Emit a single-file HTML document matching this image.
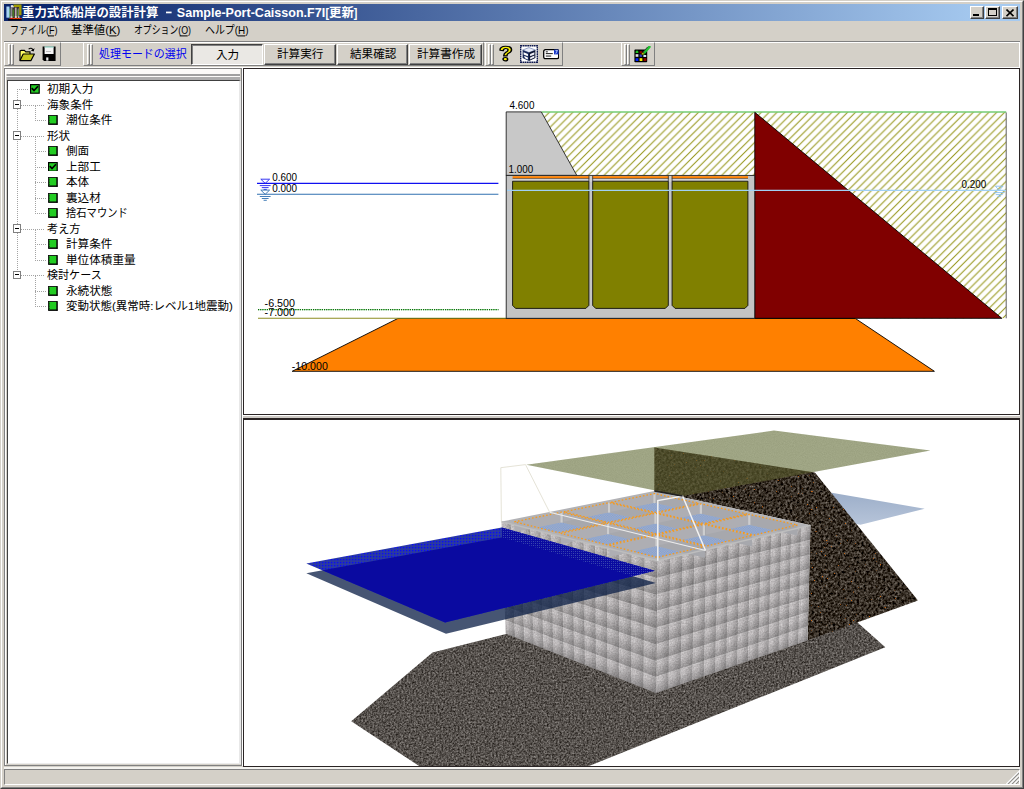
<!DOCTYPE html><html lang="ja"><head><meta charset="utf-8"><title>重力式係船岸の設計計算 - Sample-Port-Caisson.F7I[更新]</title><style>
html,body{margin:0;padding:0;}
body{width:1024px;height:789px;overflow:hidden;background:#d4d0c8;font-family:"Liberation Sans","Noto Sans CJK JP",sans-serif;font-size:12px;position:relative;}
.a{position:absolute;box-sizing:border-box;}
svg.t{position:absolute;overflow:visible;}
svg.t text{font-family:"Liberation Sans","Noto Sans CJK JP",sans-serif;}
.raised{border:1px solid;border-color:#fff #808080 #808080 #fff;}
.sunk{border:1px solid;border-color:#808080 #fff #fff #808080;}
.btn{background:#d4d0c8;border:1px solid;border-color:#fff #404040 #404040 #fff;box-shadow:inset -1px -1px 0 #808080;}
.grip{width:3px;border:1px solid;border-color:#fff #808080 #808080 #fff;}
</style></head><body><div class="a" style="left:0;top:0;width:1024px;height:789px;border:1px solid;border-color:#d4d0c8 #404040 #404040 #d4d0c8;"></div><div class="a" style="left:1px;top:1px;width:1022px;height:787px;border:1px solid;border-color:#fff #808080 #808080 #fff;"></div><div class="a" style="left:4px;top:4px;width:1016px;height:17.1px;background:linear-gradient(90deg,#0a246a 0%,#0a246a 3%,#a6caf0 97%,#a6caf0 100%);"></div><svg class="a" style="left:5.5px;top:4.4px" width="16" height="16.6" viewBox="0 0 16 16.6"><rect x="0.4" y="2.5" width="3.1" height="11.2" fill="#a8d4f4"/><rect x="3.5" y="4.6" width="0.9" height="9" fill="#80d870"/><rect x="7.4" y="0.5" width="8.1" height="3.6" fill="#a09a00"/><rect x="12.8" y="4" width="2.7" height="7.2" fill="#a09a00"/><rect x="4.5" y="3" width="8.6" height="11" fill="#3a3030"/><path d="M4.8 1.2L6.6 0.9L8.2 3.2L4.8 3.6Z" fill="#e8e6e6"/><rect x="4.6" y="3.6" width="1.8" height="10.4" fill="#8c8a92"/><rect x="6.6" y="5.4" width="1.2" height="7.6" fill="#4a8a20"/><rect x="8.9" y="3.6" width="1.7" height="10.4" fill="#b4acac"/><rect x="11.2" y="5.4" width="1.1" height="7.6" fill="#4a8a20"/><rect x="12.3" y="4.4" width="0.9" height="9.6" fill="#8c8a92"/><rect x="4.6" y="12.4" width="1.8" height="1.6" fill="#d8d8d8"/><rect x="8.9" y="12.2" width="1.7" height="1.8" fill="#e0e0e0"/><rect x="12.0" y="12.4" width="1.4" height="1.6" fill="#d0d0d0"/><rect x="3.6" y="13.9" width="11.9" height="1.2" fill="#e05000"/><path d="M4 14.5h1.6M6.2 14.5h1M9.4 14.5h1M12.2 14.5h0.9M14 14.5h1" stroke="#d00818" stroke-width="1.2"/><rect x="2" y="15" width="13.8" height="1.4" fill="#100808"/></svg><svg class="t" style="left:22.4px;top:6.0px;" width="138.4" height="15.5" viewBox="0 0 138.4 15.5"><title>重力式係船岸の設計計算</title><text x="0" y="10.91" font-size="12.4" font-weight="bold" fill="#fff" textLength="136.4" lengthAdjust="spacingAndGlyphs">重力式係船岸の設計計算</text></svg><svg class="a" style="left:160px;top:4px;font-family:'Liberation Sans',sans-serif;font-weight:bold" width="210" height="18" viewBox="160 4 210 18" fill="#fff" font-size="12.6"><rect x="166" y="11.6" width="5.6" height="1.7"/><text x="176.8" y="17" textLength="148.4" lengthAdjust="spacingAndGlyphs">Sample-Port-Caisson.F7I</text><text x="325.4" y="17" textLength="3.6" lengthAdjust="spacingAndGlyphs">[</text><text x="353.8" y="17" textLength="3.6" lengthAdjust="spacingAndGlyphs">]</text></svg><svg class="t" style="left:328.6px;top:6.0px;" width="26.8" height="15.5" viewBox="0 0 26.8 15.5"><title>更新</title><text x="0" y="10.91" font-size="12.4" font-weight="bold" fill="#fff" textLength="24.8" lengthAdjust="spacingAndGlyphs">更新</text></svg><div class="a btn" style="left:969.6px;top:5.8px;width:14.6px;height:13.2px;"></div><div class="a" style="left:973.4px;top:14.2px;width:6px;height:1.9px;background:#000"></div><div class="a btn" style="left:984.6px;top:5.8px;width:15.8px;height:13.2px;"></div><div class="a" style="left:988px;top:8px;width:9px;height:8.2px;border:1px solid #000;border-top-width:2px"></div><div class="a btn" style="left:1002.4px;top:5.8px;width:15.4px;height:13.2px;"></div><svg class="a" style="left:1006.2px;top:8.6px" width="8" height="8" viewBox="0 0 8 8"><path d="M0.5 0.5L7.5 7.2M7.5 0.5L0.5 7.2" stroke="#000" stroke-width="1.6" fill="none"/></svg><svg class="t" style="left:10.2px;top:23.6px;" width="49.6" height="14.5" viewBox="0 0 49.6 14.5"><title>ファイル(F)</title><text x="0" y="10.21" font-size="11.6" fill="#000" textLength="47.6" lengthAdjust="spacingAndGlyphs">ファイル(F)</text><rect x="38.0" y="11.4" width="6.0" height="1" fill="#000"/></svg><svg class="t" style="left:71px;top:23.6px;" width="51.4" height="14.5" viewBox="0 0 51.4 14.5"><title>基準値(K)</title><text x="0" y="10.21" font-size="11.6" fill="#000" textLength="49.4" lengthAdjust="spacingAndGlyphs">基準値(K)</text><rect x="38.2" y="11.4" width="7.4" height="1" fill="#000"/></svg><svg class="t" style="left:134.2px;top:23.6px;" width="59.0" height="14.5" viewBox="0 0 59.0 14.5"><title>オプション(O)</title><text x="0" y="10.21" font-size="11.6" fill="#000" textLength="57" lengthAdjust="spacingAndGlyphs">オプション(O)</text><rect x="45.7" y="11.4" width="8.0" height="1" fill="#000"/></svg><svg class="t" style="left:205px;top:23.6px;" width="45.6" height="14.5" viewBox="0 0 45.6 14.5"><title>ヘルプ(H)</title><text x="0" y="10.21" font-size="11.6" fill="#000" textLength="43.6" lengthAdjust="spacingAndGlyphs">ヘルプ(H)</text><rect x="32.6" y="11.4" width="7.6" height="1" fill="#000"/></svg><div class="a" style="left:4px;top:40.6px;width:1016px;height:1px;background:#808080"></div><div class="a" style="left:4px;top:41.6px;width:1016px;height:1px;background:#fff"></div><div class="a raised" style="left:4.4px;top:42.4px;width:57px;height:24px;"></div><div class="a grip" style="left:7.6000000000000005px;top:44.4px;height:20.4px;"></div><div class="a grip" style="left:10.8px;top:44.4px;height:20.4px;"></div><div class="a raised" style="left:83.4px;top:42.4px;width:400.4px;height:24px;"></div><div class="a grip" style="left:86.60000000000001px;top:44.4px;height:20.4px;"></div><div class="a grip" style="left:89.80000000000001px;top:44.4px;height:20.4px;"></div><div class="a raised" style="left:484.6px;top:42.4px;width:78px;height:24px;"></div><div class="a grip" style="left:487.8px;top:44.4px;height:20.4px;"></div><div class="a grip" style="left:491.0px;top:44.4px;height:20.4px;"></div><div class="a raised" style="left:620.6px;top:42.4px;width:34.8px;height:24px;"></div><div class="a grip" style="left:623.8000000000001px;top:44.4px;height:20.4px;"></div><div class="a grip" style="left:627.0px;top:44.4px;height:20.4px;"></div><div class="a" style="left:4px;top:66.6px;width:1016px;height:1px;background:#808080"></div><div class="a" style="left:4px;top:67.4px;width:1016px;height:1px;background:#fff"></div><svg class="a" style="left:19px;top:46px" width="16.5" height="16" viewBox="0 0 16.5 16"><path d="M1 14.6V5.6Q1 4.4 2.2 4.4H5.4L6.8 5.8H11V8" fill="#ffff66" stroke="#000" stroke-width="1.2"/><path d="M1 14.6L4.2 8H15.4L12 14.6Z" fill="#c8c820" stroke="#000" stroke-width="1.2" stroke-linejoin="round"/><path d="M9.6 3.2Q12.4 0.8 14.4 4.2" fill="none" stroke="#000" stroke-width="1.1"/><path d="M15.6 2.2L14.6 5.6L11.8 4.6Z" fill="#000"/></svg><svg class="a" style="left:42px;top:46.4px" width="14.4" height="15.6" viewBox="0 0 14.4 15.6"><path d="M0.6 0.6H13.6V15H2L0.6 13.6Z" fill="#000"/><rect x="2.6" y="0.6" width="9" height="7.4" fill="#f4f4f4"/><rect x="2.6" y="0.4" width="9" height="1.2" fill="#8fd0c0"/><rect x="4" y="5.2" width="5" height="0.8" fill="#b0b0b0"/><rect x="3.6" y="10.6" width="7" height="4.4" fill="#000"/><rect x="4.2" y="11.4" width="2.2" height="3.2" fill="#e8e8e8"/></svg><svg class="t" style="left:98.6px;top:48.2px;" width="89.7" height="14.5" viewBox="0 0 89.7 14.5"><title>処理モードの選択</title><text x="0" y="10.21" font-size="11.6" fill="#0000f0" textLength="87.7" lengthAdjust="spacingAndGlyphs">処理モードの選択</text></svg><div class="a" style="left:191.4px;top:44px;width:71.2px;height:20.8px;border:1px solid;border-color:#404040 #fff #fff #404040;box-shadow:inset 1px 1px 0 #808080;background:#eae8e4"></div><svg class="t" style="left:216.4px;top:49.2px;" width="25.2" height="14.5" viewBox="0 0 25.2 14.5"><title>入力</title><text x="0" y="10.21" font-size="11.6" fill="#000" textLength="23.2" lengthAdjust="spacingAndGlyphs">入力</text></svg><div class="a btn" style="left:264px;top:44px;width:71.6px;height:20.8px;"></div><svg class="t" style="left:277px;top:48.3px;" width="48.4" height="14.5" viewBox="0 0 48.4 14.5"><title>計算実行</title><text x="0" y="10.21" font-size="11.6" fill="#000" textLength="46.4" lengthAdjust="spacingAndGlyphs">計算実行</text></svg><div class="a btn" style="left:336.8px;top:44px;width:71px;height:20.8px;"></div><svg class="t" style="left:350px;top:48.3px;" width="48.4" height="14.5" viewBox="0 0 48.4 14.5"><title>結果確認</title><text x="0" y="10.21" font-size="11.6" fill="#000" textLength="46.4" lengthAdjust="spacingAndGlyphs">結果確認</text></svg><div class="a btn" style="left:409px;top:44px;width:73px;height:20.8px;"></div><svg class="t" style="left:416.6px;top:48.3px;" width="60.0" height="14.5" viewBox="0 0 60.0 14.5"><title>計算書作成</title><text x="0" y="10.21" font-size="11.6" fill="#000" textLength="58" lengthAdjust="spacingAndGlyphs">計算書作成</text></svg><svg class="a" style="left:497.3px;top:44.8px" width="17.5" height="17.2" viewBox="0 0 13 17" preserveAspectRatio="none"><path d="M2.2 5.2Q2.2 1.2 6.4 1.2Q10.8 1.2 10.8 4.8Q10.8 7 8.6 8.2Q7.4 9 7.4 10.8H5.0Q5 8.4 6.6 7.2Q8.2 6.2 8.2 4.9Q8.2 3.5 6.5 3.5Q4.8 3.5 4.6 5.6Z" fill="#f8f000" stroke="#000" stroke-width="1.1" stroke-linejoin="round"/><circle cx="6.2" cy="14" r="1.7" fill="#f8f000" stroke="#000" stroke-width="1.1"/></svg><svg class="a" style="left:519.6px;top:45px" width="18" height="18" viewBox="0 0 18 18"><rect x="0.7" y="0.7" width="16.6" height="16.6" fill="#fff" stroke="#101a50" stroke-width="1.4" stroke-dasharray="1.7 0.5"/><path d="M2.6 5L9 2.6L15.4 5L9 7.6Z" fill="#e8ecf8" stroke="#7080b0" stroke-width="0.7"/><path d="M2.6 5V13L9 16V7.6Z" fill="#18285a" /><path d="M15.4 5V13L9 16V7.6Z" fill="#0c1430" /><path d="M3.6 7.2L7.9 9.1V11.2L3.6 9.4ZM4.0 10.8L7.9 12.5V14.4L5.0 13.2Z" fill="#fff"/><path d="M10.1 9.1L14.4 7.2V9.4L10.1 11.2ZM10.1 12.5L14.4 10.6V12.6L10.1 14.4Z" fill="#f0f0f8"/></svg><svg class="a" style="left:542.6px;top:49.4px" width="16.5" height="10.5" viewBox="0 0 16.5 10.5"><rect x="0.7" y="0.7" width="15" height="9" rx="1.6" fill="#fff" stroke="#000" stroke-width="1.3"/><rect x="2.8" y="2.4" width="2" height="0.9" fill="#000"/><rect x="2.8" y="4.2" width="7" height="0.9" fill="#000"/><rect x="2.8" y="6.6" width="5.4" height="0.9" fill="#000"/><rect x="11" y="0.6" width="4.6" height="4.8" fill="#1838c8"/><path d="M12.4 1.4H14.4L12.8 4.6" stroke="#cfe0ff" stroke-width="0.8" fill="none"/></svg><svg class="a" style="left:634.4px;top:45.6px" width="17" height="17" viewBox="0 0 17 17"><rect x="0.4" y="3.6" width="12.8" height="12.6" rx="0.8" fill="#000"/><path d="M1.6 7V5.6L3 4.2L4.4 5.6V7Z" fill="#20c020"/><rect x="5.6" y="5.2" width="2.6" height="2.2" fill="#900000"/><rect x="1.6" y="8.2" width="2.8" height="2.6" fill="#e0e0e0"/><rect x="5.6" y="8.4" width="2.6" height="2.4" fill="#3838d0"/><rect x="9.4" y="9" width="2.8" height="2" fill="#d8e8f8"/><rect x="1.6" y="12.2" width="2.8" height="2.8" fill="#0020ff"/><rect x="5.6" y="12.2" width="2.8" height="2.8" fill="#f8f000"/><rect x="9.6" y="12.2" width="2.8" height="2.8" fill="#900000"/><path d="M9.2 7.8L15.4 0.8" stroke="#20c030" stroke-width="2.6" stroke-linecap="round"/><path d="M9 6.2L13.6 1" stroke="#303030" stroke-width="0.9"/><path d="M7.2 9L7.8 7L9.6 6.6L10.2 8.2Z" fill="#f8e000" stroke="#000" stroke-width="0.5"/></svg><div class="a" style="left:1018.8px;top:41.6px;width:1.2px;height:26.4px;background:#fff"></div><div class="a" style="left:4.2px;top:68.4px;width:237.6px;height:697.6px;border:0.9px solid;border-color:#808080 #808080 #808080 #808080;"></div><div class="a" style="left:5.1px;top:69.3px;width:1px;height:696px;background:#fff"></div><div class="a" style="left:6px;top:69.3px;width:233.6px;height:4.8px;background:#fbfaf8"></div><div class="a" style="left:6.6px;top:74.1px;width:233px;height:1.8px;background:#a0a0a0"></div><div class="a" style="left:6px;top:75.9px;width:233.6px;height:1.3px;background:#fbfaf8"></div><div class="a" style="left:6.6px;top:77.2px;width:233px;height:2.5px;background:#adadad"></div><div class="a" style="left:7.2px;top:79.8px;width:233.6px;height:683.8px;background:#fff;border:1.2px solid;border-color:#404040 #e8e8e8 #ececec #404040;border-right-width:2.6px"></div><div class="a" style="left:16.5px;top:89.0px;width:1px;height:186.0px;background:repeating-linear-gradient(180deg,#a4a4a4 0 1px,transparent 1px 2px)"></div><div class="a" style="left:17px;top:89.2px;width:11px;height:1px;background:repeating-linear-gradient(90deg,#a4a4a4 0 1px,transparent 1px 2px)"></div><div class="a" style="left:21px;top:104.7px;width:23px;height:1px;background:repeating-linear-gradient(90deg,#a4a4a4 0 1px,transparent 1px 2px)"></div><div class="a" style="left:34.9px;top:105.9px;width:1px;height:14.7px;background:repeating-linear-gradient(180deg,#a4a4a4 0 1px,transparent 1px 2px)"></div><div class="a" style="left:35px;top:120.2px;width:11px;height:1px;background:repeating-linear-gradient(90deg,#a4a4a4 0 1px,transparent 1px 2px)"></div><div class="a" style="left:12.8px;top:100.2px;width:8.4px;height:8.4px;background:#fff;border:1px solid #808080"></div><div class="a" style="left:14.8px;top:104.0px;width:4.4px;height:1px;background:#000"></div><div class="a" style="left:21px;top:135.6px;width:23px;height:1px;background:repeating-linear-gradient(90deg,#a4a4a4 0 1px,transparent 1px 2px)"></div><div class="a" style="left:34.9px;top:136.8px;width:1px;height:76.7px;background:repeating-linear-gradient(180deg,#a4a4a4 0 1px,transparent 1px 2px)"></div><div class="a" style="left:35px;top:151.1px;width:11px;height:1px;background:repeating-linear-gradient(90deg,#a4a4a4 0 1px,transparent 1px 2px)"></div><div class="a" style="left:35px;top:166.6px;width:11px;height:1px;background:repeating-linear-gradient(90deg,#a4a4a4 0 1px,transparent 1px 2px)"></div><div class="a" style="left:35px;top:182.1px;width:11px;height:1px;background:repeating-linear-gradient(90deg,#a4a4a4 0 1px,transparent 1px 2px)"></div><div class="a" style="left:35px;top:197.6px;width:11px;height:1px;background:repeating-linear-gradient(90deg,#a4a4a4 0 1px,transparent 1px 2px)"></div><div class="a" style="left:35px;top:213.1px;width:11px;height:1px;background:repeating-linear-gradient(90deg,#a4a4a4 0 1px,transparent 1px 2px)"></div><div class="a" style="left:12.8px;top:131.2px;width:8.4px;height:8.4px;background:#fff;border:1px solid #808080"></div><div class="a" style="left:14.8px;top:134.9px;width:4.4px;height:1px;background:#000"></div><div class="a" style="left:21px;top:228.6px;width:23px;height:1px;background:repeating-linear-gradient(90deg,#a4a4a4 0 1px,transparent 1px 2px)"></div><div class="a" style="left:34.9px;top:229.8px;width:1px;height:30.2px;background:repeating-linear-gradient(180deg,#a4a4a4 0 1px,transparent 1px 2px)"></div><div class="a" style="left:35px;top:244.1px;width:11px;height:1px;background:repeating-linear-gradient(90deg,#a4a4a4 0 1px,transparent 1px 2px)"></div><div class="a" style="left:35px;top:259.6px;width:11px;height:1px;background:repeating-linear-gradient(90deg,#a4a4a4 0 1px,transparent 1px 2px)"></div><div class="a" style="left:12.8px;top:224.2px;width:8.4px;height:8.4px;background:#fff;border:1px solid #808080"></div><div class="a" style="left:14.8px;top:227.9px;width:4.4px;height:1px;background:#000"></div><div class="a" style="left:21px;top:275.1px;width:23px;height:1px;background:repeating-linear-gradient(90deg,#a4a4a4 0 1px,transparent 1px 2px)"></div><div class="a" style="left:34.9px;top:276.3px;width:1px;height:30.2px;background:repeating-linear-gradient(180deg,#a4a4a4 0 1px,transparent 1px 2px)"></div><div class="a" style="left:35px;top:290.6px;width:11px;height:1px;background:repeating-linear-gradient(90deg,#a4a4a4 0 1px,transparent 1px 2px)"></div><div class="a" style="left:35px;top:306.1px;width:11px;height:1px;background:repeating-linear-gradient(90deg,#a4a4a4 0 1px,transparent 1px 2px)"></div><div class="a" style="left:12.8px;top:270.8px;width:8.4px;height:8.4px;background:#fff;border:1px solid #808080"></div><div class="a" style="left:14.8px;top:274.4px;width:4.4px;height:1px;background:#000"></div><svg class="a" style="left:30.2px;top:84.15px" width="9.8" height="9.8" viewBox="0 0 9.8 9.8"><rect x="0.6" y="0.6" width="8.6" height="8.6" fill="#22cc22" stroke="#000" stroke-width="1.2"/><path d="M1.8 4.2L4 6.6L8 2.2" fill="none" stroke="#000" stroke-width="1.7"/></svg><svg class="t" style="left:46.8px;top:83.05px;" width="48.4" height="14.5" viewBox="0 0 48.4 14.5"><title>初期入力</title><text x="0" y="10.21" font-size="11.6" fill="#000" textLength="46.4" lengthAdjust="spacingAndGlyphs">初期入力</text></svg><svg class="t" style="left:46.8px;top:98.55px;" width="48.4" height="14.5" viewBox="0 0 48.4 14.5"><title>海象条件</title><text x="0" y="10.21" font-size="11.6" fill="#000" textLength="46.4" lengthAdjust="spacingAndGlyphs">海象条件</text></svg><svg class="a" style="left:48.4px;top:115.35000000000001px" width="9.8" height="9.9" viewBox="0 0 9.8 9.9"><rect x="0.5" y="0.5" width="8.6" height="8.6" fill="#22cc22" stroke="#101010" stroke-width="0.9"/><rect x="8.5" y="0.3" width="1.1" height="9.5" fill="#000"/><rect x="0.3" y="8.7" width="9.3" height="1.1" fill="#000"/><path d="M1.1 2.2h0.9M1.1 4h0.9M1.1 5.8h0.9M1.1 7.4h0.9" stroke="#000" stroke-width="0.7"/></svg><svg class="t" style="left:65.8px;top:114.05px;" width="48.4" height="14.5" viewBox="0 0 48.4 14.5"><title>潮位条件</title><text x="0" y="10.21" font-size="11.6" fill="#000" textLength="46.4" lengthAdjust="spacingAndGlyphs">潮位条件</text></svg><svg class="t" style="left:46.8px;top:129.54999999999998px;" width="25.2" height="14.5" viewBox="0 0 25.2 14.5"><title>形状</title><text x="0" y="10.21" font-size="11.6" fill="#000" textLength="23.2" lengthAdjust="spacingAndGlyphs">形状</text></svg><svg class="a" style="left:48.4px;top:146.35px" width="9.8" height="9.9" viewBox="0 0 9.8 9.9"><rect x="0.5" y="0.5" width="8.6" height="8.6" fill="#22cc22" stroke="#101010" stroke-width="0.9"/><rect x="8.5" y="0.3" width="1.1" height="9.5" fill="#000"/><rect x="0.3" y="8.7" width="9.3" height="1.1" fill="#000"/><path d="M1.1 2.2h0.9M1.1 4h0.9M1.1 5.8h0.9M1.1 7.4h0.9" stroke="#000" stroke-width="0.7"/></svg><svg class="t" style="left:65.8px;top:145.04999999999998px;" width="25.2" height="14.5" viewBox="0 0 25.2 14.5"><title>側面</title><text x="0" y="10.21" font-size="11.6" fill="#000" textLength="23.2" lengthAdjust="spacingAndGlyphs">側面</text></svg><svg class="a" style="left:48.4px;top:161.64999999999998px" width="9.8" height="9.8" viewBox="0 0 9.8 9.8"><rect x="0.6" y="0.6" width="8.6" height="8.6" fill="#22cc22" stroke="#000" stroke-width="1.2"/><path d="M1.8 4.2L4 6.6L8 2.2" fill="none" stroke="#000" stroke-width="1.7"/></svg><svg class="t" style="left:65.8px;top:160.54999999999998px;" width="36.8" height="14.5" viewBox="0 0 36.8 14.5"><title>上部工</title><text x="0" y="10.21" font-size="11.6" fill="#000" textLength="34.8" lengthAdjust="spacingAndGlyphs">上部工</text></svg><svg class="a" style="left:48.4px;top:177.35px" width="9.8" height="9.9" viewBox="0 0 9.8 9.9"><rect x="0.5" y="0.5" width="8.6" height="8.6" fill="#22cc22" stroke="#101010" stroke-width="0.9"/><rect x="8.5" y="0.3" width="1.1" height="9.5" fill="#000"/><rect x="0.3" y="8.7" width="9.3" height="1.1" fill="#000"/><path d="M1.1 2.2h0.9M1.1 4h0.9M1.1 5.8h0.9M1.1 7.4h0.9" stroke="#000" stroke-width="0.7"/></svg><svg class="t" style="left:65.8px;top:176.04999999999998px;" width="25.2" height="14.5" viewBox="0 0 25.2 14.5"><title>本体</title><text x="0" y="10.21" font-size="11.6" fill="#000" textLength="23.2" lengthAdjust="spacingAndGlyphs">本体</text></svg><svg class="a" style="left:48.4px;top:192.85px" width="9.8" height="9.9" viewBox="0 0 9.8 9.9"><rect x="0.5" y="0.5" width="8.6" height="8.6" fill="#22cc22" stroke="#101010" stroke-width="0.9"/><rect x="8.5" y="0.3" width="1.1" height="9.5" fill="#000"/><rect x="0.3" y="8.7" width="9.3" height="1.1" fill="#000"/><path d="M1.1 2.2h0.9M1.1 4h0.9M1.1 5.8h0.9M1.1 7.4h0.9" stroke="#000" stroke-width="0.7"/></svg><svg class="t" style="left:65.8px;top:191.54999999999998px;" width="36.8" height="14.5" viewBox="0 0 36.8 14.5"><title>裏込材</title><text x="0" y="10.21" font-size="11.6" fill="#000" textLength="34.8" lengthAdjust="spacingAndGlyphs">裏込材</text></svg><svg class="a" style="left:48.4px;top:208.35px" width="9.8" height="9.9" viewBox="0 0 9.8 9.9"><rect x="0.5" y="0.5" width="8.6" height="8.6" fill="#22cc22" stroke="#101010" stroke-width="0.9"/><rect x="8.5" y="0.3" width="1.1" height="9.5" fill="#000"/><rect x="0.3" y="8.7" width="9.3" height="1.1" fill="#000"/><path d="M1.1 2.2h0.9M1.1 4h0.9M1.1 5.8h0.9M1.1 7.4h0.9" stroke="#000" stroke-width="0.7"/></svg><svg class="t" style="left:65.8px;top:207.04999999999998px;" width="63.8" height="14.5" viewBox="0 0 63.8 14.5"><title>捨石マウンド</title><text x="0" y="10.21" font-size="11.6" fill="#000" textLength="61.8" lengthAdjust="spacingAndGlyphs">捨石マウンド</text></svg><svg class="t" style="left:46.8px;top:222.54999999999998px;" width="35.4" height="14.5" viewBox="0 0 35.4 14.5"><title>考え方</title><text x="0" y="10.21" font-size="11.6" fill="#000" textLength="33.4" lengthAdjust="spacingAndGlyphs">考え方</text></svg><svg class="a" style="left:48.4px;top:239.35px" width="9.8" height="9.9" viewBox="0 0 9.8 9.9"><rect x="0.5" y="0.5" width="8.6" height="8.6" fill="#22cc22" stroke="#101010" stroke-width="0.9"/><rect x="8.5" y="0.3" width="1.1" height="9.5" fill="#000"/><rect x="0.3" y="8.7" width="9.3" height="1.1" fill="#000"/><path d="M1.1 2.2h0.9M1.1 4h0.9M1.1 5.8h0.9M1.1 7.4h0.9" stroke="#000" stroke-width="0.7"/></svg><svg class="t" style="left:65.8px;top:238.04999999999998px;" width="48.4" height="14.5" viewBox="0 0 48.4 14.5"><title>計算条件</title><text x="0" y="10.21" font-size="11.6" fill="#000" textLength="46.4" lengthAdjust="spacingAndGlyphs">計算条件</text></svg><svg class="a" style="left:48.4px;top:254.85px" width="9.8" height="9.9" viewBox="0 0 9.8 9.9"><rect x="0.5" y="0.5" width="8.6" height="8.6" fill="#22cc22" stroke="#101010" stroke-width="0.9"/><rect x="8.5" y="0.3" width="1.1" height="9.5" fill="#000"/><rect x="0.3" y="8.7" width="9.3" height="1.1" fill="#000"/><path d="M1.1 2.2h0.9M1.1 4h0.9M1.1 5.8h0.9M1.1 7.4h0.9" stroke="#000" stroke-width="0.7"/></svg><svg class="t" style="left:65.8px;top:253.54999999999998px;" width="71.6" height="14.5" viewBox="0 0 71.6 14.5"><title>単位体積重量</title><text x="0" y="10.21" font-size="11.6" fill="#000" textLength="69.6" lengthAdjust="spacingAndGlyphs">単位体積重量</text></svg><svg class="t" style="left:46.8px;top:269.05px;" width="56.7" height="14.5" viewBox="0 0 56.7 14.5"><title>検討ケース</title><text x="0" y="10.21" font-size="11.6" fill="#000" textLength="54.7" lengthAdjust="spacingAndGlyphs">検討ケース</text></svg><svg class="a" style="left:48.4px;top:285.84999999999997px" width="9.8" height="9.9" viewBox="0 0 9.8 9.9"><rect x="0.5" y="0.5" width="8.6" height="8.6" fill="#22cc22" stroke="#101010" stroke-width="0.9"/><rect x="8.5" y="0.3" width="1.1" height="9.5" fill="#000"/><rect x="0.3" y="8.7" width="9.3" height="1.1" fill="#000"/><path d="M1.1 2.2h0.9M1.1 4h0.9M1.1 5.8h0.9M1.1 7.4h0.9" stroke="#000" stroke-width="0.7"/></svg><svg class="t" style="left:65.8px;top:284.55px;" width="48.4" height="14.5" viewBox="0 0 48.4 14.5"><title>永続状態</title><text x="0" y="10.21" font-size="11.6" fill="#000" textLength="46.4" lengthAdjust="spacingAndGlyphs">永続状態</text></svg><svg class="a" style="left:48.4px;top:301.34999999999997px" width="9.8" height="9.9" viewBox="0 0 9.8 9.9"><rect x="0.5" y="0.5" width="8.6" height="8.6" fill="#22cc22" stroke="#101010" stroke-width="0.9"/><rect x="8.5" y="0.3" width="1.1" height="9.5" fill="#000"/><rect x="0.3" y="8.7" width="9.3" height="1.1" fill="#000"/><path d="M1.1 2.2h0.9M1.1 4h0.9M1.1 5.8h0.9M1.1 7.4h0.9" stroke="#000" stroke-width="0.7"/></svg><svg class="t" style="left:65.8px;top:300.05px;" width="168.8" height="14.5" viewBox="0 0 168.8 14.5"><title>変動状態(異常時:レベル1地震動)</title><text x="0" y="10.21" font-size="11.6" fill="#000" textLength="166.8" lengthAdjust="spacingAndGlyphs">変動状態(異常時:レベル1地震動)</text></svg><div class="a" style="left:242px;top:68.2px;width:1.2px;height:698px;background:#fff"></div><div class="a" style="left:243.2px;top:68px;width:776.8px;height:347px;background:#fff;border:1.6px solid #2a2424;"></div><div class="a" style="left:243.2px;top:417.8px;width:776.8px;height:349.2px;background:#fff;border:1.6px solid #2a2424;border-top-width:2px"></div><div class="a" style="left:243.2px;top:415px;width:776.8px;height:1.2px;background:#fff;"></div><div class="a" style="left:243.2px;top:416.2px;width:776.8px;height:1.7px;background:#cfcbc6;"></div><svg class="a" style="left:245px;top:70px;font-family:'Liberation Sans',sans-serif" width="774" height="344" viewBox="245 70 774 344"><defs><pattern id="hatch" width="7.85" height="7.85" patternUnits="userSpaceOnUse" x="2.2" y="0"><path d="M-1 8.85L8.85 -1M-1 1L1 -1M6.85 8.85L8.85 6.85" stroke="#96961c" stroke-width="1.05" fill="none"/></pattern></defs><path d="M541.3 111.9H1006.2V318.3H754.6V175.4H576.8Z" fill="url(#hatch)"/><path d="M541.3 111.9H1006.2" stroke="#74cc74" stroke-width="1.5"/><path d="M1006.2 112.5V318.3" stroke="#606060" stroke-width="1"/><path d="M754.8 112.30000000000001L1001.8 318.3H754.8Z" fill="#800000" stroke="#000" stroke-width="0.9" stroke-linejoin="round"/><path d="M292.2 371.3L397.8 318.5H855.4L934.4 371.3Z" fill="#ff8000" stroke="#000" stroke-width="0.9"/><path d="M258 318.3H506" stroke="#8c8c20" stroke-width="1.1"/><path d="M258 309.6H498.4" stroke="#10a010" stroke-width="1.1" stroke-dasharray="1.3 0.9"/><path d="M258 309.6H498.4" stroke="#003000" stroke-width="1.1" stroke-dasharray="0.7 1.5" opacity="0.7"/><path d="M506.2 111.9H541.3L576.8 175.4H506.2Z" fill="#c8c8c8" stroke="#202020" stroke-width="0.9"/><rect x="506.2" y="175.4" width="248.5" height="142.9" fill="#c4c4c4" stroke="#202020" stroke-width="0.9"/><rect x="512.6" y="176.2" width="235.4" height="2.2" fill="#ff8000"/><rect x="512.6" y="178.5" width="235.4" height="0.7" fill="#303030"/><rect x="512.6" y="179.2" width="235.4" height="1.6" fill="#e0e0e0"/><path d="M512.6 181.2H588.9V305.4L585.9 308.4H515.6L512.6 305.4Z" fill="#808000" stroke="#101010" stroke-width="0.9"/><path d="M592.7 181.2H668.3V305.4L665.3 308.4H595.7L592.7 305.4Z" fill="#808000" stroke="#101010" stroke-width="0.9"/><path d="M672.1 181.2H747.9V305.4L744.9 308.4H675.1L672.1 305.4Z" fill="#808000" stroke="#101010" stroke-width="0.9"/><rect x="589.3" y="175.9" width="3.0000000000000684" height="6" fill="#d0d0d0"/><path d="M588.9 175.8V182M592.7 175.8V182" stroke="#303030" stroke-width="0.8"/><rect x="668.6999999999999" y="175.9" width="3.0000000000000684" height="6" fill="#d0d0d0"/><path d="M668.3 175.8V182M672.1 175.8V182" stroke="#303030" stroke-width="0.8"/><path d="M257 183.4H498.4" stroke="#1010f0" stroke-width="1.2"/><path d="M257 194.3H498.4" stroke="#3070b0" stroke-width="1.1"/><path d="M260.8 179.20000000000002H269.59999999999997L265.2 183.4Z" fill="none" stroke="#2020f0" stroke-width="0.9"/><path d="M259.8 185.6H270.59999999999997M261.8 187.6H268.59999999999997M263.59999999999997 189.4H266.8" stroke="#2020f0" stroke-width="0.9"/><path d="M260.8 190.10000000000002H269.59999999999997L265.2 194.3Z" fill="none" stroke="#3070b0" stroke-width="0.9"/><path d="M259.8 196.5H270.59999999999997M261.8 198.5H268.59999999999997M263.59999999999997 200.3H266.8" stroke="#3070b0" stroke-width="0.9"/><path d="M507 190.4H1006" stroke="#a0d0f4" stroke-width="1.1"/><path d="M995.4000000000001 186.20000000000002H1003.0L999.2 190.4Z" fill="none" stroke="#88c0f0" stroke-width="0.9"/><path d="M993.8000000000001 192.6H1004.6M995.8000000000001 194.6H1002.6M997.6 196.4H1000.8000000000001" stroke="#88c0f0" stroke-width="0.9"/><text x="509.6" y="109.4" font-size="11.6" textLength="24.8" lengthAdjust="spacingAndGlyphs" fill="#000">4.600</text><text x="508.6" y="173.0" font-size="11.6" textLength="24.6" lengthAdjust="spacingAndGlyphs" fill="#000">1.000</text><text x="272.2" y="181.0" font-size="11.6" textLength="24.8" lengthAdjust="spacingAndGlyphs" fill="#000">0.600</text><text x="272.2" y="192.0" font-size="11.6" textLength="24.8" lengthAdjust="spacingAndGlyphs" fill="#000">0.000</text><text x="961.6" y="187.9" font-size="11.6" textLength="24.6" lengthAdjust="spacingAndGlyphs" fill="#000">0.200</text><text x="264.6" y="307.0" font-size="11.6" textLength="30.4" lengthAdjust="spacingAndGlyphs" fill="#000">-6.500</text><text x="264.6" y="316.2" font-size="11.6" textLength="30.4" lengthAdjust="spacingAndGlyphs" fill="#000">-7.000</text><text x="291.8" y="369.6" font-size="11.6" textLength="36" lengthAdjust="spacingAndGlyphs" fill="#000">-10.000</text></svg><svg class="a" style="left:245px;top:420px" width="774" height="345.6" viewBox="245 420 774 345.6"><defs><filter id="fMound" x="0" y="0" width="100%" height="100%" color-interpolation-filters="sRGB"><feTurbulence type="fractalNoise" baseFrequency="0.55" numOctaves="3" seed="4" result="n"/><feColorMatrix in="n" type="matrix" values="0.62 0 0 0 0.027  0.62 0 0 0 0.008  0.62 0 0 0 -0.008  0 0 0 0 1.0" result="c"/><feComposite in="c" in2="SourceGraphic" operator="in"/></filter><filter id="fBack" x="0" y="0" width="100%" height="100%" color-interpolation-filters="sRGB"><feTurbulence type="fractalNoise" baseFrequency="0.42" numOctaves="3" seed="9" result="n"/><feColorMatrix in="n" type="matrix" values="0.8 0 0 0 -0.188  0.8 0 0 0 -0.220  0.8 0 0 0 -0.255  0 0 0 0 1.0" result="c"/><feComposite in="c" in2="SourceGraphic" operator="in"/></filter><filter id="fConc" x="0" y="0" width="100%" height="100%" color-interpolation-filters="sRGB"><feTurbulence type="fractalNoise" baseFrequency="0.65" numOctaves="2" seed="2" result="n"/><feColorMatrix in="n" type="matrix" values="0.24 0 0 0 0.660  0.24 0 0 0 0.645  0.24 0 0 0 0.649  0 0 0 0 1.0" result="c"/><feComposite in="c" in2="SourceGraphic" operator="in"/></filter><filter id="fGreen" x="0" y="0" width="100%" height="100%" color-interpolation-filters="sRGB"><feTurbulence type="fractalNoise" baseFrequency="0.9" numOctaves="2" seed="7" result="n"/><feColorMatrix in="n" type="matrix" values="0.9 0 0 0 0.138  0.9 0 0 0 0.158  0.9 0 0 0 0.040  0 0 0 0 1.0" result="c"/><feComposite in="c" in2="SourceGraphic" operator="in"/></filter><filter id="fSpeck" x="0" y="0" width="100%" height="100%" color-interpolation-filters="sRGB"><feTurbulence type="fractalNoise" baseFrequency="0.45" numOctaves="2" seed="21" result="n"/><feColorMatrix in="n" type="matrix" values="0 0 0 0 0.78  0 0 0 0 0.40  0 0 0 0 0.08  14 0 0 0 -10.5" result="c"/><feComposite in="c" in2="SourceGraphic" operator="in"/></filter><pattern id="dith" width="3" height="3" patternUnits="userSpaceOnUse"><rect width="3" height="3" fill="#2a3aa0"/><rect x="1" y="1" width="1.3" height="1.3" fill="#0808ff"/></pattern><pattern id="dithc" width="4" height="4" patternUnits="userSpaceOnUse"><rect width="4" height="4" fill="#0a0aa0"/><rect x="1" y="1" width="1" height="1" fill="#3c4ab0"/><rect x="3" y="3" width="1" height="1" fill="#3c4ab0"/><rect x="3" y="1" width="1" height="1" fill="#2a36a8"/><rect x="1" y="3" width="1" height="1" fill="#2a36a8"/></pattern><pattern id="dfloor" width="2.4" height="2.4" patternUnits="userSpaceOnUse"><rect x="0" y="0" width="1.2" height="1.2" fill="#b0b4be" fill-opacity="0.85"/><rect x="1.2" y="1.2" width="1.2" height="1.2" fill="#b0b4be" fill-opacity="0.85"/></pattern></defs><polygon points="351.2,721.2 432.5,652.5 506.0,634.0 808.5,640.0 857.0,622.0 885.3,647.2 566.6,775.0 432.7,775.0" fill="#fff" filter="url(#fMound)"/><linearGradient id="gRw" x1="0" y1="0" x2="0" y2="1"><stop offset="0" stop-color="#9badc8"/><stop offset="1" stop-color="#b6c4d9"/></linearGradient><polygon points="820.0,490.7 924.7,508.7 860.5,524.7 800.0,515.0" fill="url(#gRw)"/><polygon points="654.4,447.4 814.9,472.5 918.0,600.5 807.6,640.4 810.4,525.2 654.4,491.0" fill="#fff" filter="url(#fBack)"/><polygon points="654.4,447.4 814.9,472.5 918.0,600.5 807.6,640.4 810.4,525.2 654.4,491.0" fill="#fff" filter="url(#fSpeck)"/><polygon points="501.4,521.6 657.8,560.7 656.0,693.0 505.7,633.5" fill="#fff" filter="url(#fConc)"/><defs><linearGradient id="bg1" gradientUnits="userSpaceOnUse" x1="503.5" y1="577.5" x2="512.6" y2="577.2"><stop offset="0" stop-color="#fff" stop-opacity="0.12"/><stop offset="0.25" stop-color="#000" stop-opacity="0"/><stop offset="1" stop-color="#000" stop-opacity="0.22"/></linearGradient><linearGradient id="bg2" gradientUnits="userSpaceOnUse" x1="512.8" y1="580.5" x2="522.1" y2="580.2"><stop offset="0" stop-color="#fff" stop-opacity="0.12"/><stop offset="0.25" stop-color="#000" stop-opacity="0"/><stop offset="1" stop-color="#000" stop-opacity="0.22"/></linearGradient><linearGradient id="bg3" gradientUnits="userSpaceOnUse" x1="522.2" y1="583.6" x2="531.8" y2="583.2"><stop offset="0" stop-color="#fff" stop-opacity="0.12"/><stop offset="0.25" stop-color="#000" stop-opacity="0"/><stop offset="1" stop-color="#000" stop-opacity="0.22"/></linearGradient><linearGradient id="bg4" gradientUnits="userSpaceOnUse" x1="531.9" y1="586.7" x2="541.7" y2="586.4"><stop offset="0" stop-color="#fff" stop-opacity="0.12"/><stop offset="0.25" stop-color="#000" stop-opacity="0"/><stop offset="1" stop-color="#000" stop-opacity="0.22"/></linearGradient><linearGradient id="bg5" gradientUnits="userSpaceOnUse" x1="541.8" y1="589.9" x2="551.9" y2="589.6"><stop offset="0" stop-color="#fff" stop-opacity="0.12"/><stop offset="0.25" stop-color="#000" stop-opacity="0"/><stop offset="1" stop-color="#000" stop-opacity="0.22"/></linearGradient><linearGradient id="bg6" gradientUnits="userSpaceOnUse" x1="552.0" y1="593.1" x2="562.4" y2="592.9"><stop offset="0" stop-color="#fff" stop-opacity="0.12"/><stop offset="0.25" stop-color="#000" stop-opacity="0"/><stop offset="1" stop-color="#000" stop-opacity="0.22"/></linearGradient><linearGradient id="bg7" gradientUnits="userSpaceOnUse" x1="562.5" y1="596.5" x2="573.1" y2="596.3"><stop offset="0" stop-color="#fff" stop-opacity="0.12"/><stop offset="0.25" stop-color="#000" stop-opacity="0"/><stop offset="1" stop-color="#000" stop-opacity="0.22"/></linearGradient><linearGradient id="bg8" gradientUnits="userSpaceOnUse" x1="573.2" y1="599.9" x2="584.1" y2="599.8"><stop offset="0" stop-color="#fff" stop-opacity="0.12"/><stop offset="0.25" stop-color="#000" stop-opacity="0"/><stop offset="1" stop-color="#000" stop-opacity="0.22"/></linearGradient><linearGradient id="bg9" gradientUnits="userSpaceOnUse" x1="584.2" y1="603.5" x2="595.4" y2="603.4"><stop offset="0" stop-color="#fff" stop-opacity="0.12"/><stop offset="0.25" stop-color="#000" stop-opacity="0"/><stop offset="1" stop-color="#000" stop-opacity="0.22"/></linearGradient><linearGradient id="bg10" gradientUnits="userSpaceOnUse" x1="595.5" y1="607.1" x2="607.1" y2="607.0"><stop offset="0" stop-color="#fff" stop-opacity="0.12"/><stop offset="0.25" stop-color="#000" stop-opacity="0"/><stop offset="1" stop-color="#000" stop-opacity="0.22"/></linearGradient><linearGradient id="bg11" gradientUnits="userSpaceOnUse" x1="607.1" y1="610.8" x2="619.0" y2="610.8"><stop offset="0" stop-color="#fff" stop-opacity="0.12"/><stop offset="0.25" stop-color="#000" stop-opacity="0"/><stop offset="1" stop-color="#000" stop-opacity="0.22"/></linearGradient><linearGradient id="bg12" gradientUnits="userSpaceOnUse" x1="619.0" y1="614.7" x2="631.3" y2="614.7"><stop offset="0" stop-color="#fff" stop-opacity="0.12"/><stop offset="0.25" stop-color="#000" stop-opacity="0"/><stop offset="1" stop-color="#000" stop-opacity="0.22"/></linearGradient><linearGradient id="bg13" gradientUnits="userSpaceOnUse" x1="631.3" y1="618.6" x2="643.9" y2="618.7"><stop offset="0" stop-color="#fff" stop-opacity="0.12"/><stop offset="0.25" stop-color="#000" stop-opacity="0"/><stop offset="1" stop-color="#000" stop-opacity="0.22"/></linearGradient><linearGradient id="bg14" gradientUnits="userSpaceOnUse" x1="643.9" y1="622.7" x2="656.9" y2="622.8"><stop offset="0" stop-color="#fff" stop-opacity="0.12"/><stop offset="0.25" stop-color="#000" stop-opacity="0"/><stop offset="1" stop-color="#000" stop-opacity="0.22"/></linearGradient><linearGradient id="bg15" gradientUnits="userSpaceOnUse" x1="579.6" y1="541.2" x2="575.9" y2="556.0"><stop offset="0" stop-color="#fff" stop-opacity="0.12"/><stop offset="0.25" stop-color="#000" stop-opacity="0"/><stop offset="1" stop-color="#000" stop-opacity="0.22"/></linearGradient><linearGradient id="bg16" gradientUnits="userSpaceOnUse" x1="579.8" y1="557.0" x2="575.8" y2="571.5"><stop offset="0" stop-color="#fff" stop-opacity="0.12"/><stop offset="0.25" stop-color="#000" stop-opacity="0"/><stop offset="1" stop-color="#000" stop-opacity="0.22"/></linearGradient><linearGradient id="bg17" gradientUnits="userSpaceOnUse" x1="579.9" y1="572.6" x2="575.8" y2="586.9"><stop offset="0" stop-color="#fff" stop-opacity="0.12"/><stop offset="0.25" stop-color="#000" stop-opacity="0"/><stop offset="1" stop-color="#000" stop-opacity="0.22"/></linearGradient><linearGradient id="bg18" gradientUnits="userSpaceOnUse" x1="580.1" y1="588.1" x2="575.8" y2="602.1"><stop offset="0" stop-color="#fff" stop-opacity="0.12"/><stop offset="0.25" stop-color="#000" stop-opacity="0"/><stop offset="1" stop-color="#000" stop-opacity="0.22"/></linearGradient><linearGradient id="bg19" gradientUnits="userSpaceOnUse" x1="580.2" y1="603.5" x2="575.8" y2="617.2"><stop offset="0" stop-color="#fff" stop-opacity="0.12"/><stop offset="0.25" stop-color="#000" stop-opacity="0"/><stop offset="1" stop-color="#000" stop-opacity="0.22"/></linearGradient><linearGradient id="bg20" gradientUnits="userSpaceOnUse" x1="580.4" y1="618.7" x2="575.8" y2="632.0"><stop offset="0" stop-color="#fff" stop-opacity="0.12"/><stop offset="0.25" stop-color="#000" stop-opacity="0"/><stop offset="1" stop-color="#000" stop-opacity="0.22"/></linearGradient><linearGradient id="bg21" gradientUnits="userSpaceOnUse" x1="580.5" y1="633.7" x2="575.8" y2="646.8"><stop offset="0" stop-color="#fff" stop-opacity="0.12"/><stop offset="0.25" stop-color="#000" stop-opacity="0"/><stop offset="1" stop-color="#000" stop-opacity="0.22"/></linearGradient><linearGradient id="bg22" gradientUnits="userSpaceOnUse" x1="580.7" y1="648.5" x2="575.8" y2="661.4"><stop offset="0" stop-color="#fff" stop-opacity="0.12"/><stop offset="0.25" stop-color="#000" stop-opacity="0"/><stop offset="1" stop-color="#000" stop-opacity="0.22"/></linearGradient></defs><polygon points="505.7,633.5 501.4,521.6 510.8,523.9 514.8,637.1" fill="url(#bg1)"/><polygon points="514.8,637.1 510.8,523.9 520.4,526.3 524.1,640.8" fill="url(#bg2)"/><polygon points="524.1,640.8 520.4,526.3 530.2,528.8 533.6,644.5" fill="url(#bg3)"/><polygon points="533.6,644.5 530.2,528.8 540.3,531.3 543.3,648.4" fill="url(#bg4)"/><polygon points="543.3,648.4 540.3,531.3 550.7,533.9 553.3,652.4" fill="url(#bg5)"/><polygon points="553.3,652.4 550.7,533.9 561.3,536.6 563.6,656.4" fill="url(#bg6)"/><polygon points="563.6,656.4 561.3,536.6 572.3,539.3 574.1,660.6" fill="url(#bg7)"/><polygon points="574.1,660.6 572.3,539.3 583.5,542.1 584.9,664.8" fill="url(#bg8)"/><polygon points="584.9,664.8 583.5,542.1 595.0,545.0 595.9,669.2" fill="url(#bg9)"/><polygon points="595.9,669.2 595.0,545.0 606.9,548.0 607.3,673.7" fill="url(#bg10)"/><polygon points="607.3,673.7 606.9,548.0 619.1,551.0 619.0,678.3" fill="url(#bg11)"/><polygon points="619.0,678.3 619.1,551.0 631.6,554.2 631.0,683.1" fill="url(#bg12)"/><polygon points="631.0,683.1 631.6,554.2 644.5,557.4 643.3,688.0" fill="url(#bg13)"/><polygon points="643.3,688.0 644.5,557.4 657.8,560.7 656.0,693.0" fill="url(#bg14)"/><polygon points="501.4,521.6 657.8,560.7 657.6,577.9 502.0,536.1" fill="url(#bg15)"/><polygon points="502.0,536.1 657.6,577.9 657.3,594.9 502.5,550.4" fill="url(#bg16)"/><polygon points="502.5,550.4 657.3,594.9 657.1,611.7 503.1,564.6" fill="url(#bg17)"/><polygon points="503.1,564.6 657.1,611.7 656.9,628.4 503.6,578.6" fill="url(#bg18)"/><polygon points="503.6,578.6 656.9,628.4 656.7,644.8 504.1,592.5" fill="url(#bg19)"/><polygon points="504.1,592.5 656.7,644.8 656.4,661.0 504.7,606.3" fill="url(#bg20)"/><polygon points="504.7,606.3 656.4,661.0 656.2,677.1 505.2,620.0" fill="url(#bg21)"/><polygon points="505.2,620.0 656.2,677.1 656.0,693.0 505.7,633.5" fill="url(#bg22)"/><polygon points="657.8,560.7 810.4,525.2 807.6,640.4 656.0,693.0" fill="#fff" filter="url(#fConc)"/><defs><linearGradient id="bg23" gradientUnits="userSpaceOnUse" x1="656.9" y1="626.9" x2="669.2" y2="627.0"><stop offset="0" stop-color="#fff" stop-opacity="0.12"/><stop offset="0.25" stop-color="#000" stop-opacity="0"/><stop offset="1" stop-color="#000" stop-opacity="0.22"/></linearGradient><linearGradient id="bg24" gradientUnits="userSpaceOnUse" x1="669.3" y1="623.3" x2="681.3" y2="623.4"><stop offset="0" stop-color="#fff" stop-opacity="0.12"/><stop offset="0.25" stop-color="#000" stop-opacity="0"/><stop offset="1" stop-color="#000" stop-opacity="0.22"/></linearGradient><linearGradient id="bg25" gradientUnits="userSpaceOnUse" x1="681.4" y1="619.8" x2="693.2" y2="619.9"><stop offset="0" stop-color="#fff" stop-opacity="0.12"/><stop offset="0.25" stop-color="#000" stop-opacity="0"/><stop offset="1" stop-color="#000" stop-opacity="0.22"/></linearGradient><linearGradient id="bg26" gradientUnits="userSpaceOnUse" x1="693.3" y1="616.3" x2="704.8" y2="616.5"><stop offset="0" stop-color="#fff" stop-opacity="0.12"/><stop offset="0.25" stop-color="#000" stop-opacity="0"/><stop offset="1" stop-color="#000" stop-opacity="0.22"/></linearGradient><linearGradient id="bg27" gradientUnits="userSpaceOnUse" x1="704.9" y1="613.0" x2="716.2" y2="613.1"><stop offset="0" stop-color="#fff" stop-opacity="0.12"/><stop offset="0.25" stop-color="#000" stop-opacity="0"/><stop offset="1" stop-color="#000" stop-opacity="0.22"/></linearGradient><linearGradient id="bg28" gradientUnits="userSpaceOnUse" x1="716.3" y1="609.7" x2="727.3" y2="609.9"><stop offset="0" stop-color="#fff" stop-opacity="0.12"/><stop offset="0.25" stop-color="#000" stop-opacity="0"/><stop offset="1" stop-color="#000" stop-opacity="0.22"/></linearGradient><linearGradient id="bg29" gradientUnits="userSpaceOnUse" x1="727.4" y1="606.4" x2="738.3" y2="606.6"><stop offset="0" stop-color="#fff" stop-opacity="0.12"/><stop offset="0.25" stop-color="#000" stop-opacity="0"/><stop offset="1" stop-color="#000" stop-opacity="0.22"/></linearGradient><linearGradient id="bg30" gradientUnits="userSpaceOnUse" x1="738.3" y1="603.3" x2="749.0" y2="603.5"><stop offset="0" stop-color="#fff" stop-opacity="0.12"/><stop offset="0.25" stop-color="#000" stop-opacity="0"/><stop offset="1" stop-color="#000" stop-opacity="0.22"/></linearGradient><linearGradient id="bg31" gradientUnits="userSpaceOnUse" x1="749.0" y1="600.2" x2="759.4" y2="600.4"><stop offset="0" stop-color="#fff" stop-opacity="0.12"/><stop offset="0.25" stop-color="#000" stop-opacity="0"/><stop offset="1" stop-color="#000" stop-opacity="0.22"/></linearGradient><linearGradient id="bg32" gradientUnits="userSpaceOnUse" x1="759.5" y1="597.1" x2="769.7" y2="597.3"><stop offset="0" stop-color="#fff" stop-opacity="0.12"/><stop offset="0.25" stop-color="#000" stop-opacity="0"/><stop offset="1" stop-color="#000" stop-opacity="0.22"/></linearGradient><linearGradient id="bg33" gradientUnits="userSpaceOnUse" x1="769.8" y1="594.2" x2="779.8" y2="594.4"><stop offset="0" stop-color="#fff" stop-opacity="0.12"/><stop offset="0.25" stop-color="#000" stop-opacity="0"/><stop offset="1" stop-color="#000" stop-opacity="0.22"/></linearGradient><linearGradient id="bg34" gradientUnits="userSpaceOnUse" x1="779.9" y1="591.2" x2="789.7" y2="591.5"><stop offset="0" stop-color="#fff" stop-opacity="0.12"/><stop offset="0.25" stop-color="#000" stop-opacity="0"/><stop offset="1" stop-color="#000" stop-opacity="0.22"/></linearGradient><linearGradient id="bg35" gradientUnits="userSpaceOnUse" x1="789.8" y1="588.4" x2="799.4" y2="588.6"><stop offset="0" stop-color="#fff" stop-opacity="0.12"/><stop offset="0.25" stop-color="#000" stop-opacity="0"/><stop offset="1" stop-color="#000" stop-opacity="0.22"/></linearGradient><linearGradient id="bg36" gradientUnits="userSpaceOnUse" x1="799.5" y1="585.6" x2="808.9" y2="585.8"><stop offset="0" stop-color="#fff" stop-opacity="0.12"/><stop offset="0.25" stop-color="#000" stop-opacity="0"/><stop offset="1" stop-color="#000" stop-opacity="0.22"/></linearGradient><linearGradient id="bg37" gradientUnits="userSpaceOnUse" x1="734.1" y1="543.0" x2="737.5" y2="557.7"><stop offset="0" stop-color="#fff" stop-opacity="0.12"/><stop offset="0.25" stop-color="#000" stop-opacity="0"/><stop offset="1" stop-color="#000" stop-opacity="0.22"/></linearGradient><linearGradient id="bg38" gradientUnits="userSpaceOnUse" x1="733.8" y1="558.5" x2="737.4" y2="573.1"><stop offset="0" stop-color="#fff" stop-opacity="0.12"/><stop offset="0.25" stop-color="#000" stop-opacity="0"/><stop offset="1" stop-color="#000" stop-opacity="0.22"/></linearGradient><linearGradient id="bg39" gradientUnits="userSpaceOnUse" x1="733.5" y1="574.1" x2="737.3" y2="588.5"><stop offset="0" stop-color="#fff" stop-opacity="0.12"/><stop offset="0.25" stop-color="#000" stop-opacity="0"/><stop offset="1" stop-color="#000" stop-opacity="0.22"/></linearGradient><linearGradient id="bg40" gradientUnits="userSpaceOnUse" x1="733.2" y1="589.6" x2="737.2" y2="603.9"><stop offset="0" stop-color="#fff" stop-opacity="0.12"/><stop offset="0.25" stop-color="#000" stop-opacity="0"/><stop offset="1" stop-color="#000" stop-opacity="0.22"/></linearGradient><linearGradient id="bg41" gradientUnits="userSpaceOnUse" x1="732.9" y1="605.1" x2="737.1" y2="619.3"><stop offset="0" stop-color="#fff" stop-opacity="0.12"/><stop offset="0.25" stop-color="#000" stop-opacity="0"/><stop offset="1" stop-color="#000" stop-opacity="0.22"/></linearGradient><linearGradient id="bg42" gradientUnits="userSpaceOnUse" x1="732.7" y1="620.5" x2="736.9" y2="634.6"><stop offset="0" stop-color="#fff" stop-opacity="0.12"/><stop offset="0.25" stop-color="#000" stop-opacity="0"/><stop offset="1" stop-color="#000" stop-opacity="0.22"/></linearGradient><linearGradient id="bg43" gradientUnits="userSpaceOnUse" x1="732.4" y1="636.0" x2="736.8" y2="649.8"><stop offset="0" stop-color="#fff" stop-opacity="0.12"/><stop offset="0.25" stop-color="#000" stop-opacity="0"/><stop offset="1" stop-color="#000" stop-opacity="0.22"/></linearGradient><linearGradient id="bg44" gradientUnits="userSpaceOnUse" x1="732.1" y1="651.3" x2="736.7" y2="665.1"><stop offset="0" stop-color="#fff" stop-opacity="0.12"/><stop offset="0.25" stop-color="#000" stop-opacity="0"/><stop offset="1" stop-color="#000" stop-opacity="0.22"/></linearGradient></defs><polygon points="656.0,693.0 657.8,560.7 670.2,557.8 668.3,688.7" fill="url(#bg23)"/><polygon points="668.3,688.7 670.2,557.8 682.4,555.0 680.4,684.5" fill="url(#bg24)"/><polygon points="680.4,684.5 682.4,555.0 694.3,552.2 692.2,680.4" fill="url(#bg25)"/><polygon points="692.2,680.4 694.3,552.2 706.0,549.5 703.8,676.4" fill="url(#bg26)"/><polygon points="703.8,676.4 706.0,549.5 717.4,546.8 715.1,672.5" fill="url(#bg27)"/><polygon points="715.1,672.5 717.4,546.8 728.6,544.2 726.2,668.6" fill="url(#bg28)"/><polygon points="726.2,668.6 728.6,544.2 739.5,541.7 737.1,664.9" fill="url(#bg29)"/><polygon points="737.1,664.9 739.5,541.7 750.2,539.2 747.8,661.1" fill="url(#bg30)"/><polygon points="747.8,661.1 750.2,539.2 760.8,536.7 758.3,657.5" fill="url(#bg31)"/><polygon points="758.3,657.5 760.8,536.7 771.1,534.3 768.5,654.0" fill="url(#bg32)"/><polygon points="768.5,654.0 771.1,534.3 781.2,532.0 778.6,650.5" fill="url(#bg33)"/><polygon points="778.6,650.5 781.2,532.0 791.1,529.7 788.4,647.1" fill="url(#bg34)"/><polygon points="788.4,647.1 791.1,529.7 800.9,527.4 798.1,643.7" fill="url(#bg35)"/><polygon points="798.1,643.7 800.9,527.4 810.4,525.2 807.6,640.4" fill="url(#bg36)"/><polygon points="657.8,560.7 810.4,525.2 810.0,539.7 657.6,577.4" fill="url(#bg37)"/><polygon points="657.6,577.4 810.0,539.7 809.7,554.2 657.3,594.0" fill="url(#bg38)"/><polygon points="657.3,594.0 809.7,554.2 809.3,568.6 657.1,610.6" fill="url(#bg39)"/><polygon points="657.1,610.6 809.3,568.6 809.0,583.0 656.9,627.2" fill="url(#bg40)"/><polygon points="656.9,627.2 809.0,583.0 808.6,597.4 656.7,643.7" fill="url(#bg41)"/><polygon points="656.7,643.7 808.6,597.4 808.3,611.8 656.4,660.2" fill="url(#bg42)"/><polygon points="656.4,660.2 808.3,611.8 807.9,626.1 656.2,676.6" fill="url(#bg43)"/><polygon points="656.2,676.6 807.9,626.1 807.6,640.4 656.0,693.0" fill="url(#bg44)"/><polygon points="501.4,521.6 657.8,560.7 810.4,525.2 654.4,491.0" fill="#b2b2b5"/><polygon points="514.4,521.8 561.6,512.2 561.6,522.6 514.4,532.1" fill="#aeaeb3"/><polygon points="561.6,512.2 605.9,522.8 605.9,533.2 561.6,522.6" fill="#a7a8ad"/><polygon points="558.6,532.7 537.4,527.5 561.6,522.6 582.8,527.7" fill="#7d9ed8"/><polygon points="558.6,532.7 537.4,527.5 561.6,522.6 582.8,527.7" fill="url(#dfloor)"/><line x1="561.6" y1="512.2" x2="561.6" y2="522.6" stroke="#d0d0d2" stroke-width="2.2" stroke-opacity="0.9"/><polygon points="563.8,511.8 609.1,502.7 609.1,512.6 563.8,521.7" fill="#aeaeb3"/><polygon points="609.1,502.7 653.4,512.9 653.4,522.8 609.1,512.6" fill="#a7a8ad"/><polygon points="608.1,522.4 586.4,517.2 609.1,512.6 630.7,517.6" fill="#7d9ed8"/><polygon points="608.1,522.4 586.4,517.2 609.1,512.6 630.7,517.6" fill="url(#dfloor)"/><line x1="609.1" y1="502.7" x2="609.1" y2="512.6" stroke="#d0d0d2" stroke-width="2.2" stroke-opacity="0.9"/><polygon points="611.1,502.3 654.5,493.6 654.5,503.1 611.1,511.8" fill="#aeaeb3"/><polygon points="654.5,493.6 698.8,503.3 698.8,512.8 654.5,503.1" fill="#a7a8ad"/><polygon points="655.4,512.4 633.3,507.3 654.5,503.1 676.7,508.0" fill="#7d9ed8"/><polygon points="655.4,512.4 633.3,507.3 654.5,503.1 676.7,508.0" fill="url(#dfloor)"/><line x1="654.5" y1="493.6" x2="654.5" y2="503.1" stroke="#d0d0d2" stroke-width="2.2" stroke-opacity="0.9"/><polygon points="560.8,533.3 608.1,523.3 608.1,534.2 560.8,544.1" fill="#aeaeb3"/><polygon points="608.1,523.3 654.3,534.4 654.3,545.2 608.1,534.2" fill="#a7a8ad"/><polygon points="607.0,544.8 584.4,539.2 608.1,534.2 630.6,539.6" fill="#7d9ed8"/><polygon points="607.0,544.8 584.4,539.2 608.1,534.2 630.6,539.6" fill="url(#dfloor)"/><line x1="608.1" y1="523.3" x2="608.1" y2="534.2" stroke="#d0d0d2" stroke-width="2.2" stroke-opacity="0.9"/><polygon points="610.2,522.9 655.5,513.3 655.5,523.8 610.2,533.3" fill="#aeaeb3"/><polygon points="655.5,513.3 701.7,523.9 701.7,534.3 655.5,523.8" fill="#a7a8ad"/><polygon points="656.5,533.9 633.4,528.4 655.5,523.8 678.5,529.0" fill="#7d9ed8"/><polygon points="656.5,533.9 633.4,528.4 655.5,523.8 678.5,529.0" fill="url(#dfloor)"/><line x1="655.5" y1="513.3" x2="655.5" y2="523.8" stroke="#d0d0d2" stroke-width="2.2" stroke-opacity="0.9"/><polygon points="657.6,512.9 700.9,503.8 700.9,513.8 657.6,522.9" fill="#aeaeb3"/><polygon points="700.9,503.8 747.1,514.0 747.1,523.9 700.9,513.8" fill="#a7a8ad"/><polygon points="703.8,523.5 680.3,518.1 700.9,513.8 724.4,518.9" fill="#7d9ed8"/><polygon points="703.8,523.5 680.3,518.1 700.9,513.8 724.4,518.9" fill="url(#dfloor)"/><line x1="700.9" y1="503.8" x2="700.9" y2="513.8" stroke="#d0d0d2" stroke-width="2.2" stroke-opacity="0.9"/><polygon points="609.3,545.3 656.5,534.9 656.5,546.3 609.3,556.7" fill="#aeaeb3"/><polygon points="656.5,534.9 704.9,546.4 704.9,557.8 656.5,546.3" fill="#a7a8ad"/><polygon points="657.6,557.4 633.5,551.4 656.5,546.3 680.6,552.0" fill="#7d9ed8"/><polygon points="657.6,557.4 633.5,551.4 656.5,546.3 680.6,552.0" fill="url(#dfloor)"/><line x1="656.5" y1="534.9" x2="656.5" y2="546.3" stroke="#d0d0d2" stroke-width="2.2" stroke-opacity="0.9"/><polygon points="658.7,534.4 703.9,524.4 703.9,535.4 658.7,545.3" fill="#aeaeb3"/><polygon points="703.9,524.4 752.2,535.5 752.2,546.4 703.9,535.4" fill="#a7a8ad"/><polygon points="707.1,545.9 682.5,540.1 703.9,535.4 728.5,541.0" fill="#7d9ed8"/><polygon points="707.1,545.9 682.5,540.1 703.9,535.4 728.5,541.0" fill="url(#dfloor)"/><line x1="703.9" y1="524.4" x2="703.9" y2="535.4" stroke="#d0d0d2" stroke-width="2.2" stroke-opacity="0.9"/><polygon points="706.0,524.0 749.3,514.4 749.3,524.9 706.0,534.4" fill="#aeaeb3"/><polygon points="749.3,514.4 797.4,525.0 797.4,535.5 749.3,524.9" fill="#a7a8ad"/><polygon points="754.3,535.0 729.3,529.3 749.3,524.9 774.3,530.4" fill="#7d9ed8"/><polygon points="754.3,535.0 729.3,529.3 749.3,524.9 774.3,530.4" fill="url(#dfloor)"/><line x1="749.3" y1="514.4" x2="749.3" y2="524.9" stroke="#d0d0d2" stroke-width="2.2" stroke-opacity="0.9"/><path d="M514.4 521.8L561.6 512.2L605.9 522.8L558.6 532.7ZM563.8 511.8L609.1 502.7L653.4 512.9L608.1 522.4ZM611.1 502.3L654.5 493.6L698.8 503.3L655.4 512.4ZM560.8 533.3L608.1 523.3L654.3 534.4L607.0 544.8ZM610.2 522.9L655.5 513.3L701.7 523.9L656.5 533.9ZM657.6 512.9L700.9 503.8L747.1 514.0L703.8 523.5ZM609.3 545.3L656.5 534.9L704.9 546.4L657.6 557.4ZM658.7 534.4L703.9 524.4L752.2 535.5L707.1 545.9ZM706.0 524.0L749.3 514.4L797.4 525.0L754.3 535.0Z" stroke="#f79a1c" stroke-width="1.3" stroke-dasharray="1.6 2.0" fill="none"/><path d="M501.4 521.6L657.8 560.7L810.4 525.2" stroke="#bdbdbd" stroke-width="1.4" fill="none"/><polygon points="526.4,464.7 774.0,430.6 930.4,450.5 683.0,496.0" fill="#9fa487" fill-opacity="0.0"/><polygon points="526.4,464.7 774.0,430.6 930.4,450.5 683.0,496.0" fill="#606a34" fill-opacity="0.60"/><polygon points="526.4,464.7 774.0,430.6 930.4,450.5 683.0,496.0" fill="#fff" filter="url(#fGreen)" opacity="0.07"/><polygon points="654.4,447.4 814.9,472.5 683.0,496.0 654.4,490.8" fill="#36260f" fill-opacity="0.24"/><clipPath id="cU"><polygon points="306.3,563.4 501.7,527.5 654.8,570.7 445.0,622.5"/></clipPath><clipPath id="cCais"><polygon points="501.4,521.6 657.8,560.7 656.0,693.0 505.7,633.5"/></clipPath><polygon points="306.3,573.3 501.7,537.5 656.0,583.0 446.0,633.8" fill="#081c44" fill-opacity="0.75"/><polygon points="306.3,563.4 501.7,527.5 654.8,570.7 445.0,622.5" fill="url(#dith)"/><g clip-path="url(#cCais)"><polygon points="306.3,563.4 501.7,527.5 654.8,570.7 445.0,622.5" fill="url(#dithc)"/></g><g clip-path="url(#cU)"><polygon points="306.3,573.3 501.7,537.5 656.0,583.0 446.0,633.8" fill="#0a0aa0"/></g><polyline points="501.4,521.6 500.8,467.7 525.5,464.6 549.6,512.2" fill="none" stroke="#dedccd" stroke-width="0.8"/><polyline points="657.8,560.7 657.8,500.6 682.6,496.0 705.5,550.5" fill="none" stroke="#f2f2f2" stroke-width="1.5"/><line x1="549.6" y1="512.2" x2="705.5" y2="550.5" stroke="#ececec" stroke-width="1.1"/><line x1="654.4" y1="491.0" x2="682.6" y2="496.0" stroke="#222" stroke-width="1.4"/></svg><div class="a" style="left:4px;top:767px;width:1016px;height:2.3px;background:#f4f3f0"></div><div class="a" style="left:4px;top:769.2px;width:1015.6px;height:16.2px;border:1.2px solid;border-color:#808080 #fff #fff #808080;"></div><svg class="a" style="left:1006px;top:771.4px" width="13" height="13" viewBox="0 0 13 13"><g stroke-width="1.3" fill="none"><path d="M1.5 13L13 1.5M5.5 13L13 5.5M9.5 13L13 9.5" stroke="#808080"/><path d="M0.4 13L13 0.4M4.4 13L13 4.4M8.4 13L13 8.4" stroke="#fff"/></g></svg></body></html>
